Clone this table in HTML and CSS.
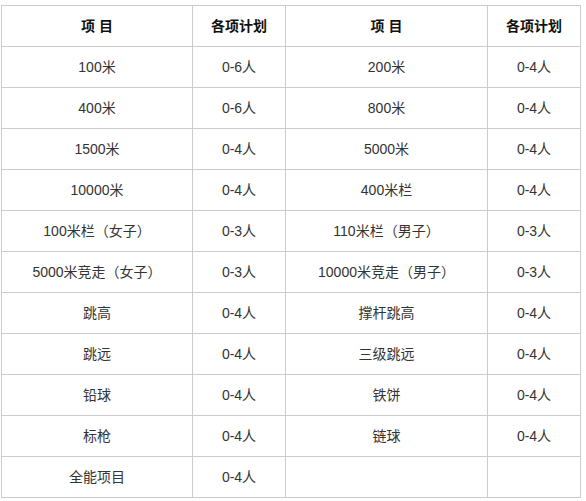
FILE: index.html
```html
<!DOCTYPE html>
<html lang="zh">
<head>
<meta charset="utf-8">
<link rel="stylesheet" href="styles.css">
</head>
<body>
<div class="wrap">
<table class="plan">
  <colgroup>
    <col class="c-name"><col class="c-num"><col class="c-name2"><col class="c-num">
  </colgroup>
  <thead>
    <tr><th>项 目</th><th>各项计划</th><th>项 目</th><th>各项计划</th></tr>
  </thead>
  <tbody>
    <tr><td>100米</td><td>0-6人</td><td>200米</td><td>0-4人</td></tr>
    <tr><td>400米</td><td>0-6人</td><td>800米</td><td>0-4人</td></tr>
    <tr><td>1500米</td><td>0-4人</td><td>5000米</td><td>0-4人</td></tr>
    <tr><td>10000米</td><td>0-4人</td><td>400米栏</td><td>0-4人</td></tr>
    <tr><td>100米栏（女子）</td><td>0-3人</td><td>110米栏（男子）</td><td>0-3人</td></tr>
    <tr><td>5000米竞走（女子）</td><td>0-3人</td><td>10000米竞走（男子）</td><td>0-3人</td></tr>
    <tr><td>跳高</td><td>0-4人</td><td>撑杆跳高</td><td>0-4人</td></tr>
    <tr><td>跳远</td><td>0-4人</td><td>三级跳远</td><td>0-4人</td></tr>
    <tr><td>铅球</td><td>0-4人</td><td>铁饼</td><td>0-4人</td></tr>
    <tr><td>标枪</td><td>0-4人</td><td>链球</td><td>0-4人</td></tr>
    <tr><td>全能项目</td><td>0-4人</td><td></td><td></td></tr>
  </tbody>
</table>
</div>
</body>
</html>
```
FILE: styles.css
```css
html, body {
  margin: 0;
  padding: 0;
  background: #fff;
}
.wrap {
  padding: 5px 0 0 1px;
}
.plan {
  border-collapse: collapse;
  table-layout: fixed;
  width: 580px;
  font-family: "Liberation Sans", "Noto Sans CJK SC", sans-serif;
  font-size: 14px;
  color: #333;
}
.c-name { width: 191px; }
.c-num { width: 93px; }
.c-name2 { width: 202px; }
.plan th,
.plan td {
  border: 1px solid #ccc;
  height: 40px;
  padding: 0;
  text-align: center;
  vertical-align: middle;
  line-height: 20px;
}
.plan th {
  font-weight: bold;
  color: #111;
}
.plan td {
  font-weight: normal;
}
```
